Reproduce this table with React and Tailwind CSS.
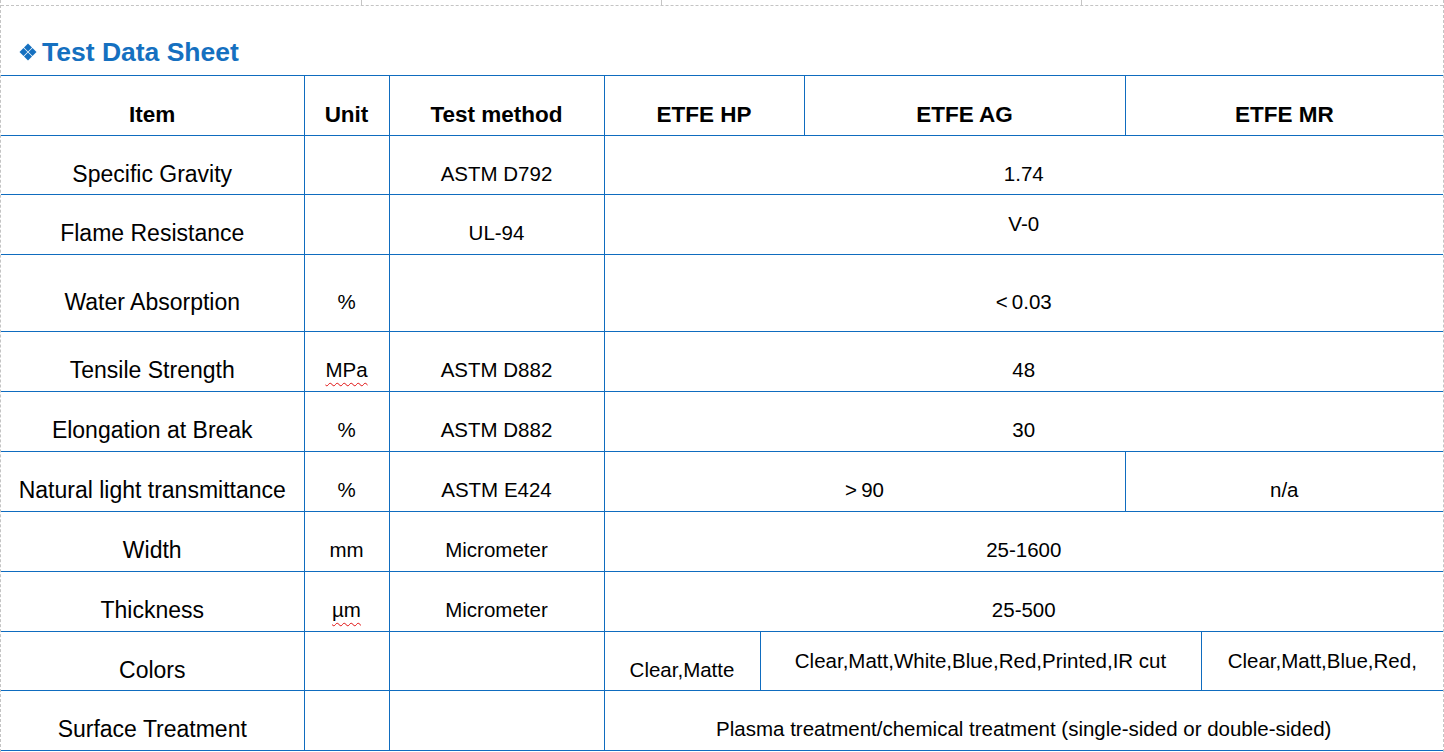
import React from 'react';

const font = { fontFamily: '"Liberation Sans", Arial, sans-serif' };

const Diamonds = () => (
    <svg width="18" height="18" viewBox="0 0 18 18" className="shrink-0">
        <polygon points="9,0.5 13,4.5 9,8.5 5,4.5" fill="#1570c0" />
        <polygon points="4.5,5 8.5,9 4.5,13 0.5,9" fill="#1570c0" />
        <polygon points="13.5,5 17.5,9 13.5,13 9.5,9" fill="#1570c0" />
        <polygon points="9,9.5 13,13.5 9,17.5 5,13.5" fill="#1570c0" />
    </svg>
);

// label cell (first column)
const Label = ({ children }) => (
    <td className="border border-[#0f6cbf] border-l-0 text-center align-middle pt-[18px] text-[23px] text-black">
        {children}
    </td>
);

// ordinary data cell
const Cell = ({ children, span = 1, centered = false, last = false }) => (
    <td
        colSpan={span}
        className={
            centered
                ? last
                    ? 'border border-[#0f6cbf] border-r-0 text-center align-middle text-[20.5px] text-black'
                    : 'border border-[#0f6cbf] text-center align-middle text-[20.5px] text-black'
                : last
                  ? 'border border-[#0f6cbf] border-r-0 text-center align-middle pt-[18px] text-[20.5px] text-black'
                  : 'border border-[#0f6cbf] text-center align-middle pt-[18px] text-[20.5px] text-black'
        }
    >
        {children}
    </td>
);

const Head = ({ children, span = 1, last = false, first = false }) => (
    <th
        colSpan={span}
        className={
            first
                ? 'border border-[#0f6cbf] border-l-0 text-center align-middle pt-[18px] text-[22.5px] font-bold text-black'
                : last
                  ? 'border border-[#0f6cbf] border-r-0 text-center align-middle pt-[18px] text-[22.5px] font-bold text-black'
                  : 'border border-[#0f6cbf] text-center align-middle pt-[18px] text-[22.5px] font-bold text-black'
        }
    >
        {children}
    </th>
);

const Misspelled = ({ children }) => (
    <span className="underline decoration-wavy decoration-[#e01010] decoration-1 underline-offset-[5px]">{children}</span>
);

export default function App() {
    return (
        <div className="w-[1444px] h-[752px] bg-white border-x border-dashed border-[#c4c4c4] overflow-hidden" style={font}>
            {/* page layout marks */}
            <div className="flex h-[6px] border-b border-dashed border-[#c4c4c4]">
                <div className="w-[361px] border-r border-dashed border-[#c4c4c4]" />
                <div className="w-[300px] border-r border-dashed border-[#c4c4c4]" />
                <div className="w-[420px] border-r border-dashed border-[#c4c4c4]" />
                <div className="flex-1" />
            </div>

            <div className="h-[69px] flex items-end pb-[8px] pl-[18px] gap-[5px]">
                <div className="mb-[6px]">
                    <Diamonds />
                </div>
                <h2 className="text-[26.5px] leading-[30px] font-bold text-[#1570c0]">Test Data Sheet</h2>
            </div>

            <table className="table-fixed w-[1442px] border-collapse">
                <colgroup>
                    <col className="w-[303px]" />
                    <col className="w-[85px]" />
                    <col className="w-[215px]" />
                    <col className="w-[156px]" />
                    <col className="w-[44px]" />
                    <col className="w-[321px]" />
                    <col className="w-[76px]" />
                    <col className="w-[242px]" />
                </colgroup>
                <thead>
                    <tr className="h-[60px]">
                        <Head first>Item</Head>
                        <Head>Unit</Head>
                        <Head>Test method</Head>
                        <Head span={2}>ETFE HP</Head>
                        <Head>ETFE AG</Head>
                        <Head span={2} last>ETFE MR</Head>
                    </tr>
                </thead>
                <tbody>
                    <tr className="h-[59px]">
                        <Label>Specific Gravity</Label>
                        <Cell />
                        <Cell>ASTM D792</Cell>
                        <Cell span={5} last>1.74</Cell>
                    </tr>
                    <tr className="h-[60px]">
                        <Label>Flame Resistance</Label>
                        <Cell />
                        <Cell>UL-94</Cell>
                        <Cell span={5} centered last>V-0</Cell>
                    </tr>
                    <tr className="h-[77px]">
                        <Label>Water Absorption</Label>
                        <Cell>%</Cell>
                        <Cell />
                        <Cell span={5} last>{'<\u20090.03'}</Cell>
                    </tr>
                    <tr className="h-[60px]">
                        <Label>Tensile Strength</Label>
                        <Cell>
                            <Misspelled>MPa</Misspelled>
                        </Cell>
                        <Cell>ASTM D882</Cell>
                        <Cell span={5} last>48</Cell>
                    </tr>
                    <tr className="h-[60px]">
                        <Label>Elongation at Break</Label>
                        <Cell>%</Cell>
                        <Cell>ASTM D882</Cell>
                        <Cell span={5} last>30</Cell>
                    </tr>
                    <tr className="h-[60px]">
                        <Label>Natural light transmittance</Label>
                        <Cell>%</Cell>
                        <Cell>ASTM E424</Cell>
                        <Cell span={3}>{'>\u200990'}</Cell>
                        <Cell span={2} last>n/a</Cell>
                    </tr>
                    <tr className="h-[60px]">
                        <Label>Width</Label>
                        <Cell>mm</Cell>
                        <Cell>Micrometer</Cell>
                        <Cell span={5} last>25-1600</Cell>
                    </tr>
                    <tr className="h-[60px]">
                        <Label>Thickness</Label>
                        <Cell>
                            <Misspelled>µm</Misspelled>
                        </Cell>
                        <Cell>Micrometer</Cell>
                        <Cell span={5} last>25-500</Cell>
                    </tr>
                    <tr className="h-[59px]">
                        <Label>Colors</Label>
                        <Cell />
                        <Cell />
                        <Cell>Clear,Matte</Cell>
                        <Cell span={3} centered>Clear,Matt,White,Blue,Red,Printed,IR cut</Cell>
                        <Cell centered last>Clear,Matt,Blue,Red,</Cell>
                    </tr>
                    <tr className="h-[60px]">
                        <Label>Surface Treatment</Label>
                        <Cell />
                        <Cell />
                        <Cell span={5} last>Plasma treatment/chemical treatment (single-sided or double-sided)</Cell>
                    </tr>
                </tbody>
            </table>
        </div>
    );
}
